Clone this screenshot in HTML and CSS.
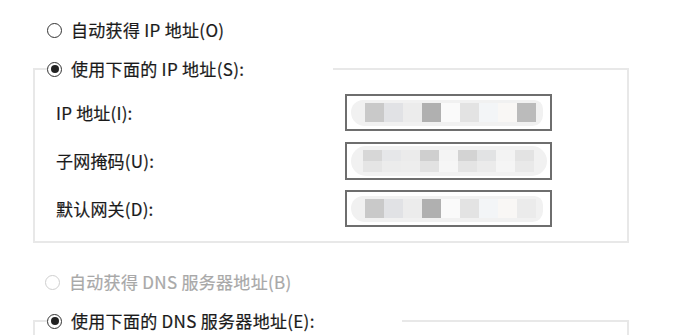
FILE: index.html
```html
<!DOCTYPE html>
<html lang="zh-CN">
<head>
<meta charset="utf-8">
<title>IP 设置</title>
<link rel="stylesheet" href="styles.css">
</head>
<body>
<div class="page">
  <div class="opt opt-ip-auto">
    <span class="radio"></span>
    <span class="opt-text">自动获得 IP 地址(O)</span>
  </div>

  <div class="group">
    <div class="group-head">
      <span class="line-short"></span>
      <span class="radio checked"></span>
      <span class="opt-text">使用下面的 IP 地址(S):</span>
      <span class="line-long line-ip"></span>
    </div>
    <div class="group-body">
      <div class="field">
        <span class="field-label">IP 地址(I):</span>
        <div class="input">
          <div class="blob">
            <span class="sq c1"></span><span class="sq c2"></span><span class="sq c3"></span><span class="sq c4"></span><span class="sq c5"></span><span class="sq c6"></span><span class="sq c7"></span><span class="sq c8"></span><span class="sq c9"></span>
          </div>
        </div>
      </div>
      <div class="field">
        <span class="field-label">子网掩码(U):</span>
        <div class="input input-mid">
          <div class="blob blob-wide">
            <div class="sq-row">
              <span class="sq half l1"></span><span class="sq half l2"></span><span class="sq half l3"></span><span class="sq half l4"></span><span class="sq half l5"></span><span class="sq half l6"></span><span class="sq half l7"></span><span class="sq half l8"></span><span class="sq half l9"></span>
            </div>
            <div class="sq-row">
              <span class="sq half m1"></span><span class="sq half m2"></span><span class="sq half m3"></span><span class="sq half m4"></span><span class="sq half m5"></span><span class="sq half m6"></span><span class="sq half m7"></span><span class="sq half m8"></span><span class="sq half m9"></span>
            </div>
          </div>
        </div>
      </div>
      <div class="field">
        <span class="field-label">默认网关(D):</span>
        <div class="input">
          <div class="blob">
            <span class="sq c1"></span><span class="sq c2"></span><span class="sq c3"></span><span class="sq c4"></span><span class="sq c5"></span><span class="sq c6"></span><span class="sq c7"></span><span class="sq c8"></span><span class="sq c10"></span>
          </div>
        </div>
      </div>
    </div>
  </div>

  <div class="opt opt-dns-auto disabled">
    <span class="radio"></span>
    <span class="opt-text">自动获得 DNS 服务器地址(B)</span>
  </div>

  <div class="group group-dns">
    <div class="group-head">
      <span class="line-short"></span>
      <span class="radio checked"></span>
      <span class="opt-text">使用下面的 DNS 服务器地址(E):</span>
      <span class="line-long line-dns"></span>
    </div>
    <div class="group-body group-body-dns"></div>
  </div>
</div>
</body>
</html>
```

FILE: styles.css
```css
html, body {
  margin: 0;
  padding: 0;
  background: #ffffff;
}

body {
  font-family: "Noto Sans CJK SC", "Noto Sans", sans-serif;
  font-size: 17px;
  color: #1a1a1a;
  width: 683px;
  height: 335px;
  overflow: hidden;
}

.page {
  padding-top: 20px;
}

.opt {
  display: flex;
  align-items: center;
  height: 20px;
  margin-left: 47px;
}

.opt-text {
  line-height: 20px;
  white-space: nowrap;
  letter-spacing: 0.3px;
  -webkit-text-stroke: 0.2px currentColor;
}

.radio {
  box-sizing: border-box;
  width: 15px;
  height: 15px;
  border: 1.6px solid #333333;
  border-radius: 50%;
  margin-right: 9px;
  flex: none;
  display: flex;
  align-items: center;
  justify-content: center;
  background: #fff;
}

.radio.checked::after {
  content: "";
  width: 8px;
  height: 8px;
  border-radius: 50%;
  background: #222222;
}

.disabled {
  color: #a8a8a8;
}

.disabled .radio {
  border-color: #cfcfcf;
}

.opt-dns-auto {
  margin-top: 29px;
  margin-left: 45px;
}

.group {
  display: flex;
  flex-direction: column;
  margin-top: 29px;
  margin-left: 33px;
  width: 596px;
  box-sizing: border-box;
  border: 2px solid #e8e8e8;
  border-top: none;
}

.group-head {
  display: flex;
  align-items: center;
  height: 20px;
  margin-top: -10px;
  margin-left: -2px;
  margin-right: -2px;
}

.line-short {
  width: 14px;
  height: 2px;
  background: #e8e8e8;
  flex: none;
}

.line-long {
  height: 2px;
  background: #e8e8e8;
  margin-left: auto;
  flex: none;
}

.line-ip {
  width: 296px;
}

.line-dns {
  width: 227px;
}

.group-body {
  display: flex;
  flex-direction: column;
  gap: 11px;
  padding: 15px 0 14px 21px;
}

.group-body-dns {
  height: 12px;
  padding: 0;
}

.field {
  display: flex;
  align-items: center;
  height: 37px;
}

.field-label {
  width: 289px;
  white-space: nowrap;
  letter-spacing: 0.2px;
  -webkit-text-stroke: 0.2px currentColor;
}

.input {
  box-sizing: border-box;
  width: 207px;
  height: 37px;
  border: 2px solid #6e6e6e;
  background: #ffffff;
  display: flex;
  align-items: center;
  padding-left: 4px;
}

.input-mid {
  height: 38px;
}

.blob {
  display: flex;
  align-items: center;
  height: 26px;
  width: 192px;
  padding-left: 14px;
  box-sizing: border-box;
  background: #f1f1f1;
  border-radius: 14px 10px 12px 16px;
}

.blob-wide {
  flex-direction: column;
  align-items: flex-start;
  justify-content: center;
  width: 196px;
  height: 30px;
  padding-left: 12px;
  border-radius: 16px;
}

.sq-row {
  display: flex;
}

.sq {
  width: 19px;
  height: 19px;
  flex: none;
}

.sq.half {
  height: 11px;
}

.c1 { background: #c9c9c9; }
.c2 { background: #e1e2e5; }
.c3 { background: #ececec; }
.c4 { background: #b0b0b0; }
.c5 { background: #fafafa; }
.c6 { background: #e3e3e3; }
.c7 { background: #f3f5f7; }
.c8 { background: #f9f7f5; }
.c9 { background: #bbbbbb; }
.c10 { background: #ebebeb; }

.l1 { background: #d7d7d7; }
.l2 { background: #e6e7e9; }
.l3 { background: #ebebeb; }
.l4 { background: #cfcfcf; }
.l5 { background: #f4f4f4; }
.l6 { background: #d3d3d3; }
.l7 { background: #e2e3e4; }
.l8 { background: #f3f3f3; }
.l9 { background: #e3e3e3; }

.m1 { background: #e5e5e5; }
.m2 { background: #ececec; }
.m3 { background: #ededed; }
.m4 { background: #e2e2e2; }
.m5 { background: #f6f6f6; }
.m6 { background: #e4e4e4; }
.m7 { background: #ebebeb; }
.m8 { background: #f5f5f5; }
.m9 { background: #e9e9e9; }
```
